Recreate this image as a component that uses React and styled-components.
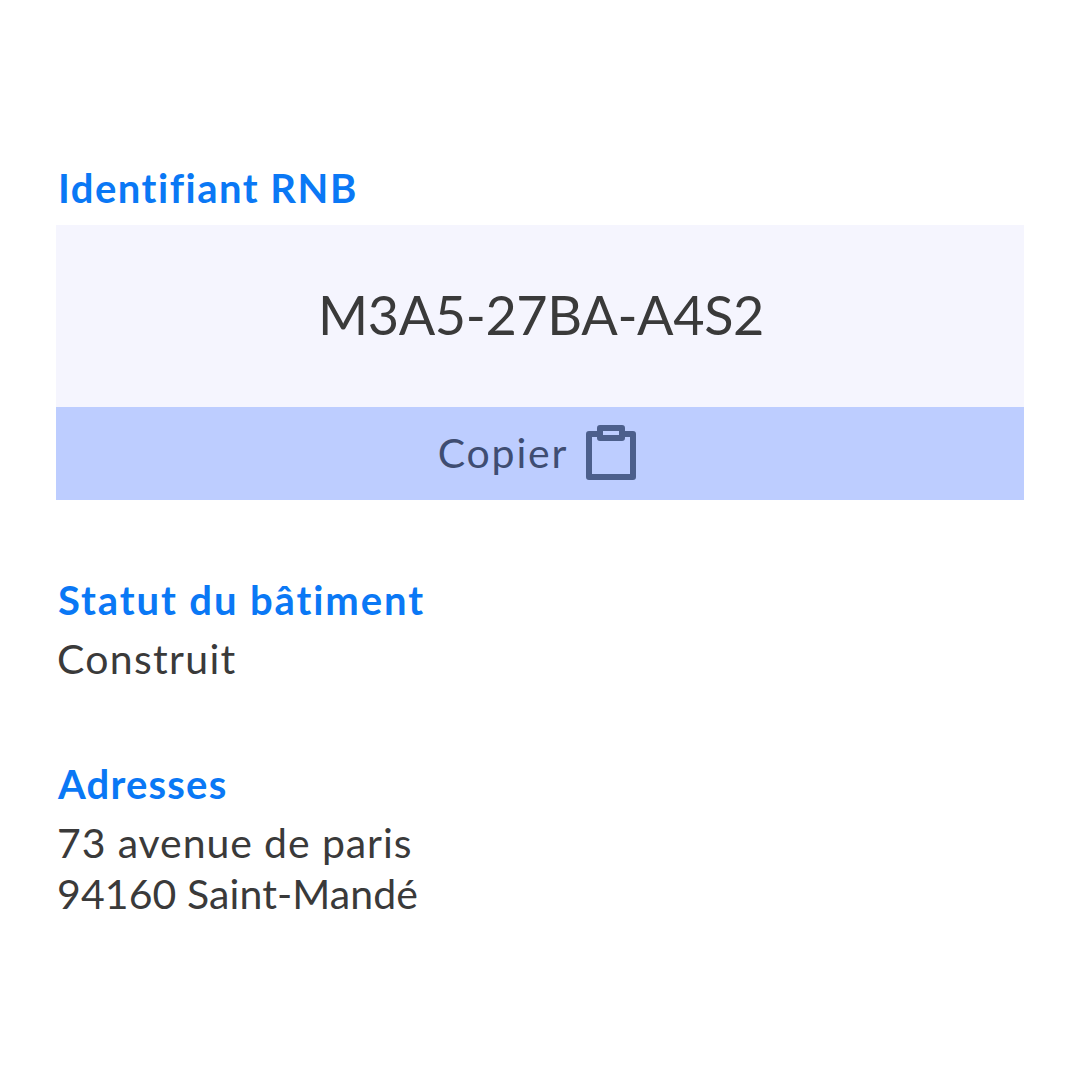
import React from "react";
import styled, { createGlobalStyle } from "styled-components";

const GlobalStyle = createGlobalStyle`
  html, body { margin: 0; padding: 0; background: #fff; }
  body { font-family: "Lato", "Open Sans", sans-serif; }
`;

const Page = styled.div`
  width: 1080px;
  height: 1080px;
  box-sizing: border-box;
  padding: 165px 56px 0 56px;
`;

const Section = styled.section`
  margin-bottom: ${(p) => p.$gap || 0}px;
`;

const Label = styled.div`
  color: #0a78f5;
  font-size: 40px;
  line-height: 46px;
  font-weight: 700;
  letter-spacing: ${(p) => p.$spacing}px;
  padding-left: 2px;
  margin-bottom: 10px;
`;

const Value = styled.div`
  color: #3a3a3a;
  font-size: 41px;
  line-height: 51px;
  letter-spacing: ${(p) => p.$spacing}px;
  padding-left: 1px;
`;

const IdBox = styled.div`
  margin-top: 14px;
  width: 968px;
`;

const IdValue = styled.div`
  height: 182px;
  padding: 0 0 4px 2px;
  box-sizing: border-box;
  background: #f5f5fe;
  color: #3a3a3a;
  font-size: 54px;
  letter-spacing: -0.4px;
  display: flex;
  align-items: center;
  justify-content: center;
`;

const CopyButton = styled.div`
  height: 93px;
  padding: 0 6px 2px 0;
  box-sizing: border-box;
  background: #bdcdff;
  color: #3f4d72;
  font-size: 41px;
  letter-spacing: 1.8px;
  display: flex;
  align-items: center;
  justify-content: center;
  gap: 18px;
`;

const ClipboardIcon = () => (
  <svg width="50" height="55" viewBox="0 0 50 55" fill="none" stroke="#4c5f8c" strokeWidth="6" strokeLinejoin="round">
    <path d="M14 9H3v43h44V9H36" />
    <rect x="14" y="3" width="22" height="10" />
  </svg>
);

export default function App() {
  return (
    <Page>
      <GlobalStyle />
      <Section $gap={77}>
        <Label $spacing={1.5}>Identifiant RNB</Label>
        <IdBox>
          <IdValue>M3A5-27BA-A4S2</IdValue>
          <CopyButton>
            Copier
            <ClipboardIcon />
          </CopyButton>
        </IdBox>
      </Section>
      <Section $gap={77}>
        <Label $spacing={1.9}>Statut du bâtiment</Label>
        <Value $spacing={1.3}>Construit</Value>
      </Section>
      <Section>
        <Label $spacing={1.2}>Adresses</Label>
        <Value $spacing={0.9}>73 avenue de paris</Value>
        <Value $spacing={0.1}>94160 Saint-Mandé</Value>
      </Section>
    </Page>
  );
}
